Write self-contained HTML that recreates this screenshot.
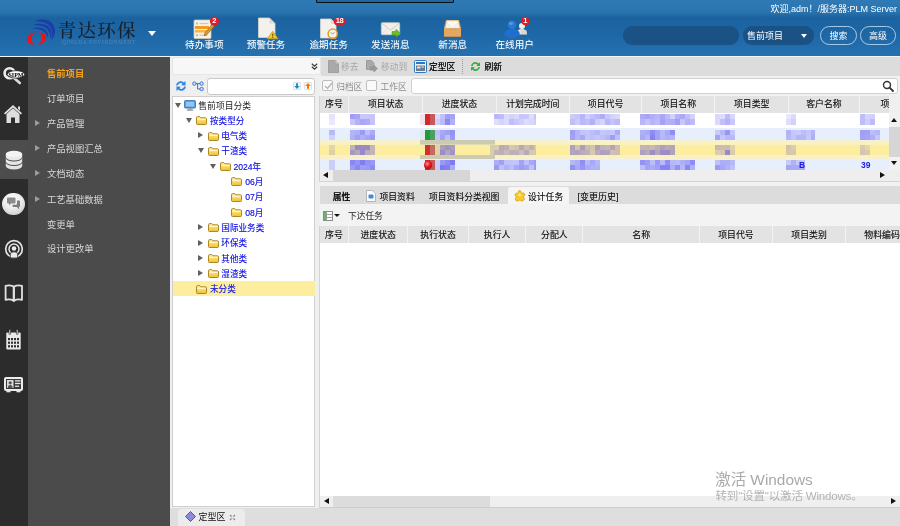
<!DOCTYPE html>
<html lang="zh-CN">
<head>
<meta charset="utf-8">
<title>PLM</title>
<style>
*{box-sizing:border-box;margin:0;padding:0}
html,body{width:900px;height:526px;overflow:hidden;background:#dedede}
body{position:relative;will-change:transform;font-family:"Liberation Sans","Noto Sans CJK SC",sans-serif;font-size:9.5px;color:#222;line-height:1}
.abs{position:absolute}
#hdr{left:0;top:0;width:900px;height:56px;background:linear-gradient(to bottom,#2f7ab5 0,#2a73ae 12px,#1b629f 18px,#1e67a6 34px,#2571b0 56px)}
#hline{left:0;top:55.7px;width:900px;height:1.4px;background:#f2f6f9}
#topbox{left:316px;top:-3.6px;width:138px;height:7px;background:#1d67a6;border:1.5px solid #0a0f14;border-radius:1px}
.logo-t{left:57.6px;top:22px;font-family:"Liberation Serif","Noto Serif CJK SC",serif;font-size:18.5px;letter-spacing:1.3px;color:#17202a;font-weight:500;white-space:nowrap}
.logo-s{left:62px;top:39.5px;font-size:5.5px;letter-spacing:0.6px;color:#5488b8;white-space:nowrap;font-family:"Liberation Serif",serif}
.tb{top:40px;width:60px;text-align:center;color:#fff;font-size:9.6px;white-space:nowrap;text-shadow:0 0 1px rgba(255,255,255,.25)}
.welcome{right:3px;top:4.6px;color:#fff;font-size:9px;white-space:nowrap}
#sbox{left:622.5px;top:26.2px;width:116px;height:18.6px;border-radius:9px;background:#1a5286}
#ssel{left:742.5px;top:26.2px;width:71.6px;height:18.6px;border-radius:9px;background:#1a5286;color:#fff;font-size:9px;padding:6.1px 0 0 4.6px}
.hbtn{top:26.2px;width:36.4px;height:18.6px;border-radius:9.3px;border:1px solid #a6c9e6;color:#fff;font-size:9px;text-align:center;padding-top:5.1px}
#ibar{left:0;top:57px;width:28px;height:469px;background:#2c2c2c}
#isel{left:0;top:140px;width:28px;height:38.5px;background:#4d4d4d}
#menu{left:28px;top:57px;width:142px;height:469px;background:#4b4b4b}
.mi{left:47px;color:#d8d8d8;font-size:9.3px;white-space:nowrap}
.ma{left:34.6px;width:0;height:0;border-left:5.6px solid #9c9c9c;border-top:3.8px solid transparent;border-bottom:3.8px solid transparent}

#treetb{left:172px;top:57px;width:148.5px;height:18px;background:#f7f7f7;border:1px solid #e6e6e6;border-radius:2px}
#treepanel{left:172px;top:96.2px;width:143.4px;height:411px;background:#fff;border:1px solid #cfcfcf}
.tr{left:173px;width:141px;height:15px}
.tt{color:#1a1ae6;font-size:8.6px;white-space:nowrap;text-shadow:0 0 .3px rgba(40,40,238,.6)}
.ta{width:0;height:0}
.ta.d{border-top:5px solid #606060;border-left:3.1px solid transparent;border-right:3.1px solid transparent}
.ta.r{border-left:5px solid #606060;border-top:3.1px solid transparent;border-bottom:3.1px solid transparent}
#tinput{left:207px;top:78px;width:108px;height:17px;background:#fff;border:1px solid #c8c8c8;border-radius:3px}

#leftbg{left:170px;top:57px;width:151px;height:451px;background:#efefef}
#mainbg{left:320px;top:57px;width:580px;height:451px;background:#f1f1f1}
#mtb{left:321px;top:57px;width:579px;height:19px;background:#dcdcdc}
.gt{font-size:8.7px;color:#a6a6a6;white-space:nowrap}
.bt{font-size:8.8px;color:#111;white-space:nowrap;text-shadow:0 0 .5px #111}
.cb{width:11px;height:11px;border:1px solid #bdbdbd;border-radius:2px;background:#fafafa}
#minput{left:411px;top:78.4px;width:487px;height:16px;background:#fff;border:1px solid #d0d0d0;border-radius:3px}
.gh{height:17.2px;background:#e3e3e3}
.ghc{top:0;height:17.2px;border-right:1px solid #f3f3f3;text-align:center;font-size:8.9px;color:#1a1a1a;padding-top:4.6px;text-shadow:0 0 .3px rgba(0,0,0,.5);white-space:nowrap;overflow:hidden}
.gr{left:320px;width:568px;height:14.5px}
.mz{height:9px;background:#b9b5f5;opacity:.9;filter:blur(.6px)}
#tabs{left:320px;top:186px;width:580px;height:18px;background:#dcdcdc}
.tab{top:186px;height:18px;font-size:8.8px;color:#151515;padding-top:7.4px;text-shadow:0 0 .3px rgba(0,0,0,.45);white-space:nowrap}
#bbar{left:170px;top:508px;width:730px;height:18px;background:#dedede}
#mos i{position:absolute;display:block}
.g2{height:16.8px}.g2 .ghc{padding-top:5.3px;height:16.8px}
</style>
</head>
<body>
<div id="hdr" class="abs"></div>
<div id="hline" class="abs"></div>
<div id="topbox" class="abs"></div>

<!-- logo -->
<svg class="abs" style="left:25px;top:17px" width="34" height="30" viewBox="0 0 34 30">
  <path d="M10 4 C15 1.5,24 1,28.5 8 C31.5 13,30 19.5,26 23.5 C28 18,27.5 11,23 7.5 C19 4.5,14 4,10 4Z" fill="#1b3fa6"/>
  <path d="M8 8 C13 6,20 6,24 10 C27 13.5,27 18.5,25 22 C25.5 17,24 13,20.5 10.5 C17 8.3,12 8,8 8Z" fill="#1b3fa6"/>
  <path d="M7 11.5 C11 10,17 10,20.5 13 C23 15.5,23.5 18.5,23 20.5 C22 17.5,20 15,17 13.5 C14 12,10 11.5,7 11.5Z" fill="#1b3fa6"/>
  <path d="M10 15.5 C4 16.5,0.5 21,3 25.5 C4.5 27.5,7.5 28,10 27 C7 25.5,5.5 23,6.5 20.5 C7.2 18.5,8.5 17,10 15.5Z" fill="#ee1219"/>
  <path d="M14.5 15.5 C19 15.5,22 18,21 22 C20 25,17 27.5,13 28 C16 25.5,17.5 23,17 20.5 C16.7 18.5,15.8 17,14.5 15.5Z" fill="#ee1219"/>
</svg>
<div class="abs logo-t">青达环保</div>
<div class="abs logo-s">QINGDA ENVIRONMENT</div>
<div class="abs" style="left:148px;top:31px;width:0;height:0;border-top:5px solid #fff;border-left:4.5px solid transparent;border-right:4.5px solid transparent"></div>

<div class="abs tb" style="left:174.3px">待办事项</div>
<div class="abs tb" style="left:236px">预警任务</div>
<div class="abs tb" style="left:298.7px">逾期任务</div>
<div class="abs tb" style="left:360.3px">发送消息</div>
<div class="abs tb" style="left:422.7px">新消息</div>
<div class="abs tb" style="left:484.7px">在线用户</div>

<div class="abs welcome">欢迎,adm！/服务器:PLM Server</div>
<div id="sbox" class="abs"></div>
<div id="ssel" class="abs">售前项目</div>
<div class="abs" style="left:801.2px;top:34px;width:0;height:0;border-top:4.2px solid #fff;border-left:3.7px solid transparent;border-right:3.7px solid transparent"></div>
<div class="abs hbtn" style="left:820.2px">搜索</div>
<div class="abs hbtn" style="left:859.7px">高级</div>

<div id="ibar" class="abs"></div>
<div id="isel" class="abs"></div>
<div id="menu" class="abs"></div>
<div class="abs mi" style="top:69.6px;color:#f5a31a;font-weight:bold">售前项目</div>
<div class="abs mi" style="top:94.6px">订单项目</div>
<div class="abs mi" style="top:119.6px">产品管理</div><div class="abs ma" style="top:119.7px"></div>
<div class="abs mi" style="top:145.0px">产品视图汇总</div><div class="abs ma" style="top:145.0px"></div>
<div class="abs mi" style="top:170.1px">文档动态</div><div class="abs ma" style="top:170.4px"></div>
<div class="abs mi" style="top:195.6px">工艺基础数据</div><div class="abs ma" style="top:195.8px"></div>
<div class="abs mi" style="top:220.6px">变更单</div>
<div class="abs mi" style="top:245.1px">设计更改单</div>



<!-- header icons -->
<svg class="abs" style="left:193px;top:16px" width="28" height="24" viewBox="0 0 28 24">
  <rect x="1" y="4" width="17" height="18.5" rx="1" fill="#f7f4ec" stroke="#cfc7b4" stroke-width=".8"/>
  <rect x="3" y="6.5" width="2" height="2" fill="#b8b8b8"/><rect x="6.5" y="6.8" width="9" height="1.4" fill="#c9c9c9"/>
  <rect x="2" y="10" width="14" height="3" fill="#f29a1f"/>
  <rect x="2" y="14" width="12" height="2.6" fill="#f6b44a"/>
  <rect x="3" y="18.2" width="2" height="2" fill="#b8b8b8"/><rect x="6.5" y="18.5" width="8" height="1.4" fill="#c9c9c9"/>
  <path d="M19.5 8 L21.5 10 L13.5 19 L11.2 19.8 L11.8 17.2Z" fill="#d99a2b" stroke="#8a5a12" stroke-width=".6"/>
  <circle cx="21.4" cy="5" r="4.6" fill="#e01c24"/>
</svg>
<div class="abs" style="left:211.4px;top:16.8px;width:6px;text-align:center;font-size:7.5px;font-weight:bold;color:#fff;line-height:8.5px">2</div>

<svg class="abs" style="left:257px;top:17px" width="23" height="23" viewBox="0 0 23 23">
  <path d="M1.5 1 L12.5 1 L18 6.5 L18 20.5 L1.5 20.5Z" fill="#f3f1ec" stroke="#d9d5cb" stroke-width=".8"/>
  <path d="M12.5 1 L12.5 6.5 L18 6.5Z" fill="#dedad0"/>
  <path d="M15.7 14.2 L21 21.8 L10.4 21.8Z" fill="#f2c531" stroke="#c99a12" stroke-width=".8" stroke-linejoin="round"/>
  <rect x="15.2" y="16.6" width="1" height="2.8" fill="#6b4e00"/><rect x="15.2" y="20" width="1" height="1" fill="#6b4e00"/>
</svg>

<svg class="abs" style="left:319px;top:16px" width="28" height="24" viewBox="0 0 28 24">
  <path d="M1.5 3 L12 3 L17 8 L17 22 L1.5 22Z" fill="#f3f1ec" stroke="#d9d5cb" stroke-width=".8"/>
  <path d="M12 3 L12 8 L17 8Z" fill="#dedad0"/>
  <circle cx="13.7" cy="17.7" r="4.6" fill="#f6f3ea" stroke="#e49a1a" stroke-width="1.5"/>
  <path d="M11.8 16.2 L13.7 18.2 L15.6 16.2" fill="none" stroke="#9a9a9a" stroke-width="1"/>
  <rect x="14.8" y="1.2" width="11.6" height="8.6" rx="4.3" fill="#e01c24"/>
</svg>
<div class="abs" style="left:333.8px;top:17px;width:11.6px;text-align:center;font-size:7.5px;font-weight:bold;color:#fff;line-height:8.5px;letter-spacing:-.3px">18</div>

<svg class="abs" style="left:380px;top:21px" width="22" height="18" viewBox="0 0 22 18">
  <rect x="1.3" y="1.7" width="18.4" height="12" rx="1.2" fill="#f2efe8" stroke="#d3cec2" stroke-width=".7"/>
  <path d="M1.5 2 L10.5 9 L19.5 2" fill="none" stroke="#cfc9bb" stroke-width=".9"/>
  <path d="M1.8 13.3 L8 7.5 M19.2 13.3 L13 7.5" stroke="#ddd8cc" stroke-width=".7"/>
  <path d="M12 10.5 L16 10.5 L16 8.3 L20.4 12.3 L16 16.3 L16 14 L12 14Z" fill="#6cbf2c" stroke="#4c9a18" stroke-width=".6"/>
</svg>

<svg class="abs" style="left:443px;top:19px" width="19" height="20" viewBox="0 0 19 20">
  <path d="M3 1 L16 1 L18 9 L18 18 L1 18 L1 9Z" fill="#dba463"/>
  <path d="M3.8 1.8 L15.2 1.8 L16.6 9 L2.4 9Z" fill="#f4f1ea"/>
  <path d="M4 4 L9.5 9 L15 4 L15 2 L4 2Z" fill="#fbfaf6" stroke="#ddd6c6" stroke-width=".5"/>
  <path d="M1 9 L6 9 L6.8 12 L12.2 12 L13 9 L18 9 L18 18 L1 18Z" fill="#e0a864"/>
  <path d="M1 17 L18 17 L18 18 L1 18Z" fill="#c98f4c"/>
</svg>

<svg class="abs" style="left:503px;top:16px" width="28" height="24" viewBox="0 0 28 24">
  <circle cx="19" cy="10" r="3" fill="#f2efe9"/>
  <path d="M13.5 18.5 Q13.5 13 19 13 Q24 13 24 18.5Z" fill="#e6e3dc"/>
  <rect x="18.5" y="14" width="5" height="4" fill="#d8d4cb" opacity=".8"/>
  <circle cx="9" cy="8.8" r="4.3" fill="#2a78d6"/>
  <ellipse cx="9" cy="17.6" rx="7.7" ry="4.6" fill="#1e6fd0"/>
  <ellipse cx="8" cy="7.5" rx="2.2" ry="1.8" fill="#5a9ce6" opacity=".8"/>
  <circle cx="22.3" cy="5" r="4.2" fill="#e01c24"/>
</svg>
<div class="abs" style="left:522.3px;top:16.7px;width:6px;text-align:center;font-size:7.5px;font-weight:bold;color:#fff;line-height:8.5px">1</div>

<!-- sidebar icons -->
<svg class="abs" style="left:2px;top:65px" width="24" height="22" viewBox="0 0 24 22">
  <circle cx="7.6" cy="8.2" r="5" fill="none" stroke="#ececec" stroke-width="2.6"/>
  <path d="M12 13 L17.8 18" stroke="#dcdcdc" stroke-width="2.6" stroke-linecap="round"/>
  <ellipse cx="14" cy="9.4" rx="8.6" ry="3.7" fill="#fff" stroke="#2a2a2a" stroke-width=".8"/><text x="14" y="11.5" text-anchor="middle" font-family="Liberation Serif,serif" font-weight="bold" font-size="6" fill="#000">SIPM</text>
</svg>


<svg class="abs" style="left:3px;top:104px" width="20" height="20" viewBox="0 0 20 20">
  <path d="M10 1 L19 9.3 L17.8 10.6 L10 3.6 L2.2 10.6 L1 9.3Z" fill="#e2e2e2"/>
  <path d="M15 2.5 L17 2.5 L17 6.5 L15 4.7Z" fill="#e2e2e2"/>
  <path d="M3.5 10 L10 4.3 L16.5 10 L16.5 19 L12 19 L12 13.5 L8 13.5 L8 19 L3.5 19Z" fill="#dedede"/>
</svg>

<svg class="abs" style="left:5px;top:150px" width="18" height="20" viewBox="0 0 18 20">
  <path d="M0.8 12.5 L0.8 16 A8.2 3.4 0 0 0 17.2 16 L17.2 12.5 A8.2 3.4 0 0 1 0.8 12.5Z" fill="#e3e3e3"/>
  <path d="M0.8 8 L0.8 11.5 A8.2 3.4 0 0 0 17.2 11.5 L17.2 8 A8.2 3.4 0 0 1 0.8 8Z" fill="#e6e6e6"/>
  <path d="M0.8 4 L0.8 7 A8.2 3.4 0 0 0 17.2 7 L17.2 4Z" fill="#e9e9e9"/>
  <ellipse cx="9" cy="4" rx="8.2" ry="3.3" fill="#f4f4f4"/>
</svg>

<div class="abs" style="left:2.3px;top:192.6px;width:22.4px;height:22.4px;border-radius:50%;background:radial-gradient(circle at 45% 30%,#ffffff 0,#ededed 45%,#bdbdbd 100%)"></div>
<svg class="abs" style="left:6px;top:197px" width="16" height="14" viewBox="0 0 16 14">
  <path d="M1 1.5 Q1 0.5 2 0.5 L8.5 0.5 Q9.5 0.5 9.5 1.5 L9.5 5.5 Q9.5 6.5 8.5 6.5 L5 6.5 L3 8.5 L3 6.5 L2 6.5 Q1 6.5 1 5.5Z" fill="#8c8c8c"/>
  <path d="M11 3.5 L13 3.5 Q14 3.5 14 4.5 L14 9 Q14 10 13 10 L13 12.2 L10.8 10 L7.5 10 Q6.5 10 6.5 9 L6.5 7.8 L10 7.8 Q11 7.8 11 6.8Z" fill="#7e7e7e"/>
</svg>

<svg class="abs" style="left:4px;top:239px" width="20" height="20" viewBox="0 0 20 20">
  <circle cx="10" cy="10" r="8.3" fill="none" stroke="#e4e4e4" stroke-width="1.7"/>
  <circle cx="10" cy="10" r="5" fill="none" stroke="#e4e4e4" stroke-width="1.5"/>
  <circle cx="10" cy="9.5" r="2.3" fill="#e9e9e9"/>
  <path d="M6.3 19 L6.3 15 Q6.3 12.8 10 12.8 Q13.7 12.8 13.7 15 L13.7 19Z" fill="#e9e9e9" stroke="#2a2a2a" stroke-width=".8"/>
</svg>

<svg class="abs" style="left:4px;top:284px" width="20" height="19" viewBox="0 0 20 19">
  <path d="M1.6 1.8 Q6 0.6 9.6 2.6 L9.6 16.6 Q6 14.8 1.6 15.8Z" fill="none" stroke="#e0e0e0" stroke-width="1.8" stroke-linejoin="round"/>
  <path d="M18 1.8 Q13.6 0.6 10 2.6 L10 16.6 Q13.6 14.8 18 15.8Z" fill="none" stroke="#e0e0e0" stroke-width="1.8" stroke-linejoin="round"/>
  <path d="M8 16.3 L9.8 18.2 L11.6 16.3Z" fill="#e0e0e0"/>
</svg>

<svg class="abs" style="left:6px;top:329px" width="15" height="21" viewBox="0 0 15 21">
  <rect x="0.3" y="3.5" width="14.4" height="17" rx="1" fill="#e9e9e9"/>
  <rect x="3" y="0.5" width="1.6" height="5" rx=".8" fill="#e9e9e9" stroke="#2a2a2a" stroke-width=".7"/>
  <rect x="10.4" y="0.5" width="1.6" height="5" rx=".8" fill="#e9e9e9" stroke="#2a2a2a" stroke-width=".7"/>
  <g fill="#2e2e2e">
   <rect x="2" y="9" width="2" height="2.2"/><rect x="5" y="9" width="2" height="2.2"/><rect x="8" y="9" width="2" height="2.2"/><rect x="11" y="9" width="2" height="2.2"/>
   <rect x="2" y="12.6" width="2" height="2.2"/><rect x="5" y="12.6" width="2" height="2.2"/><rect x="8" y="12.6" width="2" height="2.2"/><rect x="11" y="12.6" width="2" height="2.2"/>
   <rect x="2" y="16.2" width="2" height="2.2"/><rect x="5" y="16.2" width="2" height="2.2"/><rect x="8" y="16.2" width="2" height="2.2"/><rect x="11" y="16.2" width="2" height="2.2"/>
  </g>
</svg>

<svg class="abs" style="left:4px;top:377px" width="19" height="16" viewBox="0 0 19 16">
  <rect x="1" y="1" width="17" height="12" rx="1" fill="#3a3a3a" stroke="#ececec" stroke-width="2"/>
  <rect x="3" y="3" width="6.5" height="8" fill="#dcdcdc"/>
  <circle cx="6.2" cy="5.8" r="1.6" fill="#555"/><path d="M3.8 11 Q3.8 8 6.2 8 Q8.6 8 8.6 11Z" fill="#555"/>
  <rect x="11" y="3.2" width="5.5" height="1.3" fill="#e6e6e6"/><rect x="11" y="5.8" width="5.5" height="1.3" fill="#e6e6e6"/><rect x="11" y="8.6" width="4" height="1.3" fill="#e6e6e6"/>
  <rect x="2.5" y="13.5" width="4" height="1.8" fill="#e6e6e6"/><rect x="12.5" y="13.5" width="4" height="1.8" fill="#e6e6e6"/>
</svg>

<div id="leftbg" class="abs"></div>
<!-- main -->
<div id="mainbg" class="abs"></div>
<div id="mtb" class="abs"></div>
<svg class="abs" style="left:327.5px;top:60px" width="11" height="13" viewBox="0 0 11 13"><path d="M0.5 0.5 L7 0.5 L10.5 4 L10.5 12.5 L0.5 12.5Z" fill="#a9a9a9" stroke="#a0a0a0"/><path d="M7 0.5 L7 4 L10.5 4" fill="#c9c9c9" stroke="#a0a0a0"/></svg>
<div class="abs gt" style="left:341px;top:62.8px">移去</div>
<svg class="abs" style="left:365.6px;top:60px" width="12" height="13" viewBox="0 0 12 13"><path d="M0.5 0.5 L5.5 0.5 L7.8 2.8 L7.8 9.5 L0.5 9.5Z" fill="#a9a9a9" stroke="#9c9c9c"/><path d="M4.5 7 L8 7 L8 5.2 L11.4 8.6 L8 12 L8 10.2 L4.5 10.2Z" fill="#9a9a9a" stroke="#8c8c8c" stroke-width=".6"/></svg>
<div class="abs gt" style="left:381px;top:62.8px">移动到</div>
<svg class="abs" style="left:414px;top:60px" width="13" height="13" viewBox="0 0 13 13"><rect x="0.5" y="0.5" width="12" height="12" rx="1" fill="#eaf3fc" stroke="#2f78c4"/><rect x="2" y="2" width="9" height="2" fill="#2f78c4"/><rect x="2" y="5.5" width="9" height="5.5" fill="#6a7c8c"/><rect x="3" y="6.5" width="3.5" height="2" fill="#dfe7ee"/><rect x="7.5" y="6.5" width="2.5" height="1" fill="#dfe7ee"/></svg>
<div class="abs bt" style="left:429px;top:62.8px">定型区</div>
<div class="abs" style="left:461.5px;top:59px;width:0;height:15px;border-left:1px dotted #9a9a9a"></div>
<svg class="abs" style="left:469.5px;top:61px" width="11" height="11" viewBox="0 0 11 11"><path d="M1 5 A4.3 4.3 0 0 1 8.6 2.6 L10 1.2 L10 5 L6.2 5 L7.5 3.7 A2.8 2.8 0 0 0 2.6 5Z" fill="#2eb135"/><path d="M10 6 A4.3 4.3 0 0 1 2.4 8.4 L1 9.8 L1 6 L4.8 6 L3.5 7.3 A2.8 2.8 0 0 0 8.4 6Z" fill="#2eb135"/></svg>
<div class="abs bt" style="left:484.5px;top:62.8px">刷新</div>
<div class="abs cb" style="left:322px;top:80.3px"></div>
<svg class="abs" style="left:323.5px;top:81.8px" width="9" height="8" viewBox="0 0 9 8"><path d="M1 4 L3.5 6.5 L8 1" fill="none" stroke="#b4b4b4" stroke-width="1.4"/></svg>
<div class="abs gt" style="left:336.2px;top:83px;color:#8e8e8e">归档区</div>
<div class="abs cb" style="left:365.5px;top:80.3px"></div>
<div class="abs gt" style="left:380.6px;top:83px;color:#8e8e8e">工作区</div>
<div id="minput" class="abs"></div>
<svg class="abs" style="left:882px;top:80px" width="12" height="12" viewBox="0 0 12 12"><circle cx="5" cy="5" r="3.5" fill="none" stroke="#333" stroke-width="1.4"/><path d="M7.6 7.6 L11 11" stroke="#333" stroke-width="1.8" stroke-linecap="round"/></svg>
<div class="abs" style="left:319.7px;top:95.9px;width:580.3px;height:85.6px;background:#fff"></div>
<div class="abs gh" style="left:319.7px;top:95.9px;width:569.2px;overflow:hidden"><div class="abs ghc" style="left:0.0px;width:29.5px">序号</div><div class="abs ghc" style="left:29.5px;width:74.1px">项目状态</div><div class="abs ghc" style="left:103.6px;width:73.3px">进度状态</div><div class="abs ghc" style="left:176.9px;width:73.4px">计划完成时间</div><div class="abs ghc" style="left:250.3px;width:72.2px">项目代号</div><div class="abs ghc" style="left:322.5px;width:73.3px">项目名称</div><div class="abs ghc" style="left:395.8px;width:73.4px">项目类型</div><div class="abs ghc" style="left:469.2px;width:71.1px">客户名称</div><div class="abs ghc" style="left:540.3px;width:73.0px;text-align:left;padding-left:20.5px;border-right:none">项目</div></div>
<div class="abs" style="left:888.9px;top:95.9px;width:11.1px;height:17.2px;background:#efefef"></div>
<div class="abs" style="left:319.7px;top:112.8px;width:569.2px;height:14.8px;background:#ffffff"></div>
<div class="abs" style="left:319.7px;top:127.6px;width:569.2px;height:15.2px;background:#e7effd"></div>
<div class="abs" style="left:319.7px;top:158.2px;width:569.2px;height:11.8px;background:#e7effd"></div>
<div class="abs" style="left:319.7px;top:140px;width:569.2px;height:19.5px;background:linear-gradient(to bottom,#f3f2dd 0,#f8f1c6 1.5px,#f8f1c6 4.2px,#fdee9f 5.2px,#fdee9f 14.8px,#f8f1c6 15.8px,#f8f1c6 18.3px,#eef1ea 19.5px)"></div>
<div class="abs" style="left:420px;top:140.2px;width:74.5px;height:19.2px;background:linear-gradient(to bottom,#cdcab2 0,#cdcab2 4.3px,rgba(253,238,159,0) 4.8px,rgba(253,238,159,0) 14.6px,#cdcab2 15.1px,#cdcab2 19.2px)"></div>
<div class="abs" style="left:490.3px;top:144.5px;width:4.2px;height:10.6px;background:#d6cfa6"></div>
<div id="mos">
<i style="left:329.4px;top:114.2px;width:5.2px;height:5.4px;background:#e5e4fc"></i><i style="left:329.4px;top:119.4px;width:5.2px;height:5.4px;background:#e9e8fd"></i>
<i style="left:350.0px;top:114.2px;width:5.2px;height:5.4px;background:#a19df6"></i><i style="left:350.0px;top:119.4px;width:5.2px;height:5.4px;background:#c7c5fa"></i><i style="left:355.0px;top:114.2px;width:5.2px;height:5.4px;background:#a8a5f7"></i><i style="left:355.0px;top:119.4px;width:5.2px;height:5.4px;background:#b3b1f8"></i><i style="left:360.0px;top:114.2px;width:5.2px;height:5.4px;background:#c8c6fa"></i><i style="left:360.0px;top:119.4px;width:5.2px;height:5.4px;background:#aaa7f7"></i><i style="left:365.0px;top:114.2px;width:5.2px;height:5.4px;background:#c9c7fa"></i><i style="left:365.0px;top:119.4px;width:5.2px;height:5.4px;background:#afacf7"></i><i style="left:370.0px;top:114.2px;width:5.2px;height:5.4px;background:#c7c5fa"></i><i style="left:370.0px;top:119.4px;width:5.2px;height:5.4px;background:#c5c3f9"></i>
<i style="left:435.0px;top:114.2px;width:5.2px;height:5.4px;background:#dbdafb"></i><i style="left:435.0px;top:119.4px;width:5.2px;height:5.4px;background:#cfcdfa"></i>
<i style="left:440.0px;top:114.2px;width:5.2px;height:5.4px;background:#c3c1f9"></i><i style="left:440.0px;top:119.4px;width:5.2px;height:5.4px;background:#bdbaf9"></i><i style="left:445.0px;top:114.2px;width:5.2px;height:5.4px;background:#a29ff6"></i><i style="left:445.0px;top:119.4px;width:5.2px;height:5.4px;background:#8d89f4"></i><i style="left:450.0px;top:114.2px;width:5.2px;height:5.4px;background:#a5a2f7"></i><i style="left:450.0px;top:119.4px;width:5.2px;height:5.4px;background:#b1aff8"></i>
<i style="left:494.4px;top:114.2px;width:5.2px;height:5.4px;background:#b9b7f8"></i><i style="left:494.4px;top:119.4px;width:5.2px;height:5.4px;background:#deddfc"></i><i style="left:499.4px;top:114.2px;width:5.2px;height:5.4px;background:#bebcf9"></i><i style="left:499.4px;top:119.4px;width:5.2px;height:5.4px;background:#d4d3fb"></i><i style="left:504.4px;top:114.2px;width:5.2px;height:5.4px;background:#dad9fb"></i><i style="left:504.4px;top:119.4px;width:5.2px;height:5.4px;background:#dbdafb"></i><i style="left:509.4px;top:114.2px;width:5.2px;height:5.4px;background:#d4d2fb"></i><i style="left:509.4px;top:119.4px;width:5.2px;height:5.4px;background:#c0bef9"></i><i style="left:514.4px;top:114.2px;width:5.2px;height:5.4px;background:#d9d7fb"></i><i style="left:514.4px;top:119.4px;width:5.2px;height:5.4px;background:#c9c7fa"></i><i style="left:519.4px;top:114.2px;width:5.2px;height:5.4px;background:#c7c5fa"></i><i style="left:519.4px;top:119.4px;width:5.2px;height:5.4px;background:#d1d0fa"></i><i style="left:524.4px;top:114.2px;width:5.2px;height:5.4px;background:#cac8fa"></i><i style="left:524.4px;top:119.4px;width:5.2px;height:5.4px;background:#dddcfc"></i><i style="left:529.4px;top:114.2px;width:5.2px;height:5.4px;background:#dddcfc"></i><i style="left:529.4px;top:119.4px;width:5.2px;height:5.4px;background:#d8d6fb"></i><i style="left:534.4px;top:114.2px;width:1.4px;height:5.4px;background:#c5c3f9"></i><i style="left:534.4px;top:119.4px;width:1.4px;height:5.4px;background:#cfcdfa"></i>
<i style="left:570.0px;top:114.2px;width:5.2px;height:5.4px;background:#cccbfa"></i><i style="left:570.0px;top:119.4px;width:5.2px;height:5.4px;background:#c0bef9"></i><i style="left:575.0px;top:114.2px;width:5.2px;height:5.4px;background:#c6c4f9"></i><i style="left:575.0px;top:119.4px;width:5.2px;height:5.4px;background:#cdcbfa"></i><i style="left:580.0px;top:114.2px;width:5.2px;height:5.4px;background:#b6b4f8"></i><i style="left:580.0px;top:119.4px;width:5.2px;height:5.4px;background:#bbb8f8"></i><i style="left:585.0px;top:114.2px;width:5.2px;height:5.4px;background:#d0cefa"></i><i style="left:585.0px;top:119.4px;width:5.2px;height:5.4px;background:#c0bef9"></i><i style="left:590.0px;top:114.2px;width:5.2px;height:5.4px;background:#c3c1f9"></i><i style="left:590.0px;top:119.4px;width:5.2px;height:5.4px;background:#b2b0f8"></i><i style="left:595.0px;top:114.2px;width:5.2px;height:5.4px;background:#b9b7f8"></i><i style="left:595.0px;top:119.4px;width:5.2px;height:5.4px;background:#cdccfa"></i><i style="left:600.0px;top:114.2px;width:5.2px;height:5.4px;background:#aeabf7"></i><i style="left:600.0px;top:119.4px;width:5.2px;height:5.4px;background:#d5d4fb"></i><i style="left:605.0px;top:114.2px;width:5.2px;height:5.4px;background:#c8c6fa"></i><i style="left:605.0px;top:119.4px;width:5.2px;height:5.4px;background:#b8b5f8"></i><i style="left:610.0px;top:114.2px;width:5.2px;height:5.4px;background:#d4d2fb"></i><i style="left:610.0px;top:119.4px;width:5.2px;height:5.4px;background:#c4c2f9"></i><i style="left:615.0px;top:114.2px;width:5.2px;height:5.4px;background:#d9d8fb"></i><i style="left:615.0px;top:119.4px;width:5.2px;height:5.4px;background:#bcbaf9"></i>
<i style="left:640.0px;top:114.2px;width:5.2px;height:5.4px;background:#adabf7"></i><i style="left:640.0px;top:119.4px;width:5.2px;height:5.4px;background:#b8b5f8"></i><i style="left:645.0px;top:114.2px;width:5.2px;height:5.4px;background:#a8a5f7"></i><i style="left:645.0px;top:119.4px;width:5.2px;height:5.4px;background:#c5c3f9"></i><i style="left:650.0px;top:114.2px;width:5.2px;height:5.4px;background:#b1aef8"></i><i style="left:650.0px;top:119.4px;width:5.2px;height:5.4px;background:#b6b4f8"></i><i style="left:655.0px;top:114.2px;width:5.2px;height:5.4px;background:#b7b5f8"></i><i style="left:655.0px;top:119.4px;width:5.2px;height:5.4px;background:#bebbf9"></i><i style="left:660.0px;top:114.2px;width:5.2px;height:5.4px;background:#a9a7f7"></i><i style="left:660.0px;top:119.4px;width:5.2px;height:5.4px;background:#a4a1f6"></i><i style="left:665.0px;top:114.2px;width:5.2px;height:5.4px;background:#bdbaf9"></i><i style="left:665.0px;top:119.4px;width:5.2px;height:5.4px;background:#b3b0f8"></i><i style="left:670.0px;top:114.2px;width:5.2px;height:5.4px;background:#d2d1fb"></i><i style="left:670.0px;top:119.4px;width:5.2px;height:5.4px;background:#b1aef8"></i><i style="left:675.0px;top:114.2px;width:5.2px;height:5.4px;background:#b4b1f8"></i><i style="left:675.0px;top:119.4px;width:5.2px;height:5.4px;background:#a19ef6"></i><i style="left:680.0px;top:114.2px;width:5.2px;height:5.4px;background:#aaa8f7"></i><i style="left:680.0px;top:119.4px;width:5.2px;height:5.4px;background:#c7c5fa"></i><i style="left:685.0px;top:114.2px;width:5.2px;height:5.4px;background:#c1bff9"></i><i style="left:685.0px;top:119.4px;width:5.2px;height:5.4px;background:#b2b0f8"></i><i style="left:690.0px;top:114.2px;width:5.2px;height:5.4px;background:#d4d3fb"></i><i style="left:690.0px;top:119.4px;width:5.2px;height:5.4px;background:#bdbbf9"></i>
<i style="left:715.0px;top:114.2px;width:5.2px;height:5.4px;background:#d9d8fb"></i><i style="left:715.0px;top:119.4px;width:5.2px;height:5.4px;background:#dbdafb"></i><i style="left:720.0px;top:114.2px;width:5.2px;height:5.4px;background:#dedcfc"></i><i style="left:720.0px;top:119.4px;width:5.2px;height:5.4px;background:#c2bff9"></i>
<i style="left:725.0px;top:114.2px;width:5.2px;height:5.4px;background:#bdbbf9"></i><i style="left:725.0px;top:119.4px;width:5.2px;height:5.4px;background:#b4b2f8"></i>
<i style="left:730.0px;top:114.2px;width:5.2px;height:5.4px;background:#d8d7fb"></i><i style="left:730.0px;top:119.4px;width:5.2px;height:5.4px;background:#c8c6fa"></i>
<i style="left:785.5px;top:114.2px;width:5.2px;height:5.4px;background:#e8e7fc"></i><i style="left:785.5px;top:119.4px;width:5.2px;height:5.4px;background:#deddfc"></i><i style="left:790.5px;top:114.2px;width:5.2px;height:5.4px;background:#dcdafb"></i><i style="left:790.5px;top:119.4px;width:5.2px;height:5.4px;background:#d3d1fb"></i>
<i style="left:860.0px;top:114.2px;width:5.2px;height:5.4px;background:#c0bdf9"></i><i style="left:860.0px;top:119.4px;width:5.2px;height:5.4px;background:#bebcf9"></i><i style="left:865.0px;top:114.2px;width:5.2px;height:5.4px;background:#d5d3fb"></i><i style="left:865.0px;top:119.4px;width:5.2px;height:5.4px;background:#cfcefa"></i><i style="left:870.0px;top:114.2px;width:4.6px;height:5.4px;background:#d2d0fb"></i><i style="left:870.0px;top:119.4px;width:4.6px;height:5.4px;background:#bdbbf9"></i>
<i style="left:329.4px;top:129.8px;width:5.2px;height:5.2px;background:#b7baf8"></i><i style="left:329.4px;top:134.8px;width:5.2px;height:5.2px;background:#cdd2fa"></i>
<i style="left:350.0px;top:129.8px;width:5.2px;height:5.2px;background:#b2b5f8"></i><i style="left:350.0px;top:134.8px;width:5.2px;height:5.2px;background:#afb1f8"></i><i style="left:355.0px;top:129.8px;width:5.2px;height:5.2px;background:#afb1f7"></i><i style="left:355.0px;top:134.8px;width:5.2px;height:5.2px;background:#a1a2f6"></i><i style="left:360.0px;top:129.8px;width:5.2px;height:5.2px;background:#9b9bf6"></i><i style="left:360.0px;top:134.8px;width:5.2px;height:5.2px;background:#adaff7"></i><i style="left:365.0px;top:129.8px;width:5.2px;height:5.2px;background:#bcbff9"></i><i style="left:365.0px;top:134.8px;width:5.2px;height:5.2px;background:#a5a6f7"></i><i style="left:370.0px;top:129.8px;width:5.2px;height:5.2px;background:#a8a9f7"></i><i style="left:370.0px;top:134.8px;width:5.2px;height:5.2px;background:#9d9df6"></i>
<i style="left:435.0px;top:129.8px;width:5.2px;height:5.2px;background:#bcbff9"></i><i style="left:435.0px;top:134.8px;width:5.2px;height:5.2px;background:#c2c6f9"></i>
<i style="left:440.0px;top:129.8px;width:5.2px;height:5.2px;background:#a7a8f7"></i><i style="left:440.0px;top:134.8px;width:5.2px;height:5.2px;background:#a2a2f6"></i><i style="left:445.0px;top:129.8px;width:5.2px;height:5.2px;background:#9f9ff6"></i><i style="left:445.0px;top:134.8px;width:5.2px;height:5.2px;background:#bdc1f9"></i><i style="left:450.0px;top:129.8px;width:5.2px;height:5.2px;background:#9493f5"></i><i style="left:450.0px;top:134.8px;width:5.2px;height:5.2px;background:#9a99f6"></i>
<i style="left:570.0px;top:129.8px;width:5.2px;height:5.2px;background:#9e9ef6"></i><i style="left:570.0px;top:134.8px;width:5.2px;height:5.2px;background:#a1a2f6"></i><i style="left:575.0px;top:129.8px;width:5.2px;height:5.2px;background:#b3b6f8"></i><i style="left:575.0px;top:134.8px;width:5.2px;height:5.2px;background:#b3b5f8"></i><i style="left:580.0px;top:129.8px;width:5.2px;height:5.2px;background:#c0c4f9"></i><i style="left:580.0px;top:134.8px;width:5.2px;height:5.2px;background:#a8aaf7"></i><i style="left:585.0px;top:129.8px;width:5.2px;height:5.2px;background:#c2c6f9"></i><i style="left:585.0px;top:134.8px;width:5.2px;height:5.2px;background:#c1c5f9"></i><i style="left:590.0px;top:129.8px;width:5.2px;height:5.2px;background:#bbbff9"></i><i style="left:590.0px;top:134.8px;width:5.2px;height:5.2px;background:#bdc1f9"></i><i style="left:595.0px;top:129.8px;width:5.2px;height:5.2px;background:#b5b8f8"></i><i style="left:595.0px;top:134.8px;width:5.2px;height:5.2px;background:#c2c6f9"></i><i style="left:600.0px;top:129.8px;width:5.2px;height:5.2px;background:#c4c9f9"></i><i style="left:600.0px;top:134.8px;width:5.2px;height:5.2px;background:#bec1f9"></i><i style="left:605.0px;top:129.8px;width:5.2px;height:5.2px;background:#c0c4f9"></i><i style="left:605.0px;top:134.8px;width:5.2px;height:5.2px;background:#b4b7f8"></i><i style="left:610.0px;top:129.8px;width:5.2px;height:5.2px;background:#c3c7f9"></i><i style="left:610.0px;top:134.8px;width:5.2px;height:5.2px;background:#9e9ef6"></i><i style="left:615.0px;top:129.8px;width:5.2px;height:5.2px;background:#a9abf7"></i><i style="left:615.0px;top:134.8px;width:5.2px;height:5.2px;background:#bec1f9"></i>
<i style="left:640.0px;top:129.8px;width:5.2px;height:5.2px;background:#aeb0f7"></i><i style="left:640.0px;top:134.8px;width:5.2px;height:5.2px;background:#a9aaf7"></i><i style="left:645.0px;top:129.8px;width:5.2px;height:5.2px;background:#a8a9f7"></i><i style="left:645.0px;top:134.8px;width:5.2px;height:5.2px;background:#b5b8f8"></i><i style="left:650.0px;top:129.8px;width:5.2px;height:5.2px;background:#8d8cf4"></i><i style="left:650.0px;top:134.8px;width:5.2px;height:5.2px;background:#8583f4"></i><i style="left:655.0px;top:129.8px;width:5.2px;height:5.2px;background:#a2a3f6"></i><i style="left:655.0px;top:134.8px;width:5.2px;height:5.2px;background:#a1a2f6"></i><i style="left:660.0px;top:129.8px;width:5.2px;height:5.2px;background:#b7baf8"></i><i style="left:660.0px;top:134.8px;width:5.2px;height:5.2px;background:#b6b9f8"></i><i style="left:665.0px;top:129.8px;width:5.2px;height:5.2px;background:#a9aaf7"></i><i style="left:665.0px;top:134.8px;width:5.2px;height:5.2px;background:#adaff7"></i><i style="left:670.0px;top:129.8px;width:5.2px;height:5.2px;background:#8e8df5"></i><i style="left:670.0px;top:134.8px;width:5.2px;height:5.2px;background:#b3b5f8"></i>
<i style="left:715.0px;top:129.8px;width:5.2px;height:5.2px;background:#c8ccfa"></i><i style="left:715.0px;top:134.8px;width:5.2px;height:5.2px;background:#a4a5f7"></i><i style="left:720.0px;top:129.8px;width:5.2px;height:5.2px;background:#b4b7f8"></i><i style="left:720.0px;top:134.8px;width:5.2px;height:5.2px;background:#c3c7f9"></i>
<i style="left:725.0px;top:129.8px;width:5.2px;height:5.2px;background:#9796f5"></i><i style="left:725.0px;top:134.8px;width:5.2px;height:5.2px;background:#b6b9f8"></i>
<i style="left:730.0px;top:129.8px;width:5.2px;height:5.2px;background:#c3c7f9"></i><i style="left:730.0px;top:134.8px;width:5.2px;height:5.2px;background:#b6b9f8"></i>
<i style="left:785.5px;top:129.8px;width:5.2px;height:5.2px;background:#b0b3f8"></i><i style="left:785.5px;top:134.8px;width:5.2px;height:5.2px;background:#b6b9f8"></i><i style="left:790.5px;top:129.8px;width:5.2px;height:5.2px;background:#c4c9f9"></i><i style="left:790.5px;top:134.8px;width:5.2px;height:5.2px;background:#c1c5f9"></i><i style="left:795.5px;top:129.8px;width:5.2px;height:5.2px;background:#c7ccfa"></i><i style="left:795.5px;top:134.8px;width:5.2px;height:5.2px;background:#b3b6f8"></i><i style="left:800.5px;top:129.8px;width:5.2px;height:5.2px;background:#bbbff9"></i><i style="left:800.5px;top:134.8px;width:5.2px;height:5.2px;background:#b3b6f8"></i><i style="left:805.5px;top:129.8px;width:5.2px;height:5.2px;background:#c2c6f9"></i><i style="left:805.5px;top:134.8px;width:5.2px;height:5.2px;background:#c6cafa"></i><i style="left:810.5px;top:129.8px;width:4.7px;height:5.2px;background:#b2b5f8"></i><i style="left:810.5px;top:134.8px;width:4.7px;height:5.2px;background:#acaef7"></i>
<i style="left:860.0px;top:129.8px;width:5.2px;height:5.2px;background:#9f9ff6"></i><i style="left:860.0px;top:134.8px;width:5.2px;height:5.2px;background:#a1a2f6"></i><i style="left:865.0px;top:129.8px;width:5.2px;height:5.2px;background:#a0a1f6"></i><i style="left:865.0px;top:134.8px;width:5.2px;height:5.2px;background:#a4a5f6"></i><i style="left:870.0px;top:129.8px;width:5.2px;height:5.2px;background:#babef9"></i><i style="left:870.0px;top:134.8px;width:5.2px;height:5.2px;background:#aeb0f7"></i><i style="left:875.0px;top:129.8px;width:5.2px;height:5.2px;background:#b5b7f8"></i><i style="left:875.0px;top:134.8px;width:5.2px;height:5.2px;background:#c3c7f9"></i>
<i style="left:329.4px;top:145.0px;width:5.2px;height:5.1px;background:#e5d6a7"></i><i style="left:329.4px;top:149.9px;width:5.2px;height:5.1px;background:#decfaa"></i>
<i style="left:350.0px;top:145.0px;width:5.2px;height:5.1px;background:#c1b2b5"></i><i style="left:350.0px;top:149.9px;width:5.2px;height:5.1px;background:#a899bf"></i><i style="left:355.0px;top:145.0px;width:5.2px;height:5.1px;background:#998ac5"></i><i style="left:355.0px;top:149.9px;width:5.2px;height:5.1px;background:#b6a7ba"></i><i style="left:360.0px;top:145.0px;width:5.2px;height:5.1px;background:#9a8bc4"></i><i style="left:360.0px;top:149.9px;width:5.2px;height:5.1px;background:#9789c5"></i><i style="left:365.0px;top:145.0px;width:5.2px;height:5.1px;background:#998ac5"></i><i style="left:365.0px;top:149.9px;width:5.2px;height:5.1px;background:#bbacb8"></i><i style="left:370.0px;top:145.0px;width:5.2px;height:5.1px;background:#c3b4b5"></i><i style="left:370.0px;top:149.9px;width:5.2px;height:5.1px;background:#c3b4b5"></i>
<i style="left:435.0px;top:145.0px;width:5.2px;height:5.1px;background:#e0d2a9"></i><i style="left:435.0px;top:149.9px;width:5.2px;height:5.1px;background:#e0d1a9"></i>
<i style="left:440.0px;top:145.0px;width:5.2px;height:5.1px;background:#ac9dbd"></i><i style="left:440.0px;top:149.9px;width:5.2px;height:5.1px;background:#9c8ec4"></i><i style="left:445.0px;top:145.0px;width:5.2px;height:5.1px;background:#9f91c2"></i><i style="left:445.0px;top:149.9px;width:5.2px;height:5.1px;background:#b4a6ba"></i><i style="left:450.0px;top:145.0px;width:5.2px;height:5.1px;background:#aa9cbe"></i><i style="left:450.0px;top:149.9px;width:5.2px;height:5.1px;background:#a293c1"></i>
<i style="left:494.4px;top:145.0px;width:5.2px;height:5.1px;background:#dacbac"></i><i style="left:494.4px;top:149.9px;width:5.2px;height:5.1px;background:#c3b4b5"></i><i style="left:499.4px;top:145.0px;width:5.2px;height:5.1px;background:#b8aab9"></i><i style="left:499.4px;top:149.9px;width:5.2px;height:5.1px;background:#beafb7"></i><i style="left:504.4px;top:145.0px;width:5.2px;height:5.1px;background:#bfb0b6"></i><i style="left:504.4px;top:149.9px;width:5.2px;height:5.1px;background:#cabbb2"></i><i style="left:509.4px;top:145.0px;width:5.2px;height:5.1px;background:#d6c7ad"></i><i style="left:509.4px;top:149.9px;width:5.2px;height:5.1px;background:#bdafb7"></i><i style="left:514.4px;top:145.0px;width:5.2px;height:5.1px;background:#d0c1b0"></i><i style="left:514.4px;top:149.9px;width:5.2px;height:5.1px;background:#bdaeb7"></i><i style="left:519.4px;top:145.0px;width:5.2px;height:5.1px;background:#b6a8ba"></i><i style="left:519.4px;top:149.9px;width:5.2px;height:5.1px;background:#cdbfb1"></i><i style="left:524.4px;top:145.0px;width:5.2px;height:5.1px;background:#cdbeb1"></i><i style="left:524.4px;top:149.9px;width:5.2px;height:5.1px;background:#b7a9b9"></i><i style="left:529.4px;top:145.0px;width:5.2px;height:5.1px;background:#c0b1b6"></i><i style="left:529.4px;top:149.9px;width:5.2px;height:5.1px;background:#d6c8ad"></i><i style="left:534.4px;top:145.0px;width:1.4px;height:5.1px;background:#d8c9ac"></i><i style="left:534.4px;top:149.9px;width:1.4px;height:5.1px;background:#d7c8ad"></i>
<i style="left:570.0px;top:145.0px;width:5.2px;height:5.1px;background:#afa1bc"></i><i style="left:570.0px;top:149.9px;width:5.2px;height:5.1px;background:#b3a5ba"></i><i style="left:575.0px;top:145.0px;width:5.2px;height:5.1px;background:#d2c3af"></i><i style="left:575.0px;top:149.9px;width:5.2px;height:5.1px;background:#b3a4bb"></i><i style="left:580.0px;top:145.0px;width:5.2px;height:5.1px;background:#ab9dbe"></i><i style="left:580.0px;top:149.9px;width:5.2px;height:5.1px;background:#baacb8"></i><i style="left:585.0px;top:145.0px;width:5.2px;height:5.1px;background:#c9bab2"></i><i style="left:585.0px;top:149.9px;width:5.2px;height:5.1px;background:#bfb1b6"></i><i style="left:590.0px;top:145.0px;width:5.2px;height:5.1px;background:#d3c4af"></i><i style="left:590.0px;top:149.9px;width:5.2px;height:5.1px;background:#d8c9ac"></i><i style="left:595.0px;top:145.0px;width:5.2px;height:5.1px;background:#ac9ebd"></i><i style="left:595.0px;top:149.9px;width:5.2px;height:5.1px;background:#bbacb8"></i><i style="left:600.0px;top:145.0px;width:5.2px;height:5.1px;background:#c0b2b6"></i><i style="left:600.0px;top:149.9px;width:5.2px;height:5.1px;background:#ae9fbd"></i><i style="left:605.0px;top:145.0px;width:5.2px;height:5.1px;background:#c5b6b4"></i><i style="left:605.0px;top:149.9px;width:5.2px;height:5.1px;background:#b0a2bc"></i><i style="left:610.0px;top:145.0px;width:5.2px;height:5.1px;background:#b3a4bb"></i><i style="left:610.0px;top:149.9px;width:5.2px;height:5.1px;background:#cfc0b0"></i><i style="left:615.0px;top:145.0px;width:5.2px;height:5.1px;background:#cdbeb1"></i><i style="left:615.0px;top:149.9px;width:5.2px;height:5.1px;background:#cbbdb1"></i>
<i style="left:640.0px;top:145.0px;width:5.2px;height:5.1px;background:#c2b3b5"></i><i style="left:640.0px;top:149.9px;width:5.2px;height:5.1px;background:#aea0bd"></i><i style="left:645.0px;top:145.0px;width:5.2px;height:5.1px;background:#c1b2b5"></i><i style="left:645.0px;top:149.9px;width:5.2px;height:5.1px;background:#b8a9b9"></i><i style="left:650.0px;top:145.0px;width:5.2px;height:5.1px;background:#c8bab3"></i><i style="left:650.0px;top:149.9px;width:5.2px;height:5.1px;background:#9b8dc4"></i><i style="left:655.0px;top:145.0px;width:5.2px;height:5.1px;background:#bbadb7"></i><i style="left:655.0px;top:149.9px;width:5.2px;height:5.1px;background:#b5a7ba"></i><i style="left:660.0px;top:145.0px;width:5.2px;height:5.1px;background:#aea0bd"></i><i style="left:660.0px;top:149.9px;width:5.2px;height:5.1px;background:#9c8dc4"></i><i style="left:665.0px;top:145.0px;width:5.2px;height:5.1px;background:#b7a9b9"></i><i style="left:665.0px;top:149.9px;width:5.2px;height:5.1px;background:#9b8dc4"></i><i style="left:670.0px;top:145.0px;width:5.2px;height:5.1px;background:#b3a4bb"></i><i style="left:670.0px;top:149.9px;width:5.2px;height:5.1px;background:#b1a3bb"></i>
<i style="left:715.0px;top:145.0px;width:5.2px;height:5.1px;background:#c8b9b3"></i><i style="left:715.0px;top:149.9px;width:5.2px;height:5.1px;background:#dcceab"></i><i style="left:720.0px;top:145.0px;width:5.2px;height:5.1px;background:#cbbdb1"></i><i style="left:720.0px;top:149.9px;width:5.2px;height:5.1px;background:#d6c7ad"></i>
<i style="left:725.0px;top:145.0px;width:5.2px;height:5.1px;background:#cbbcb1"></i><i style="left:725.0px;top:149.9px;width:5.2px;height:5.1px;background:#998ac5"></i>
<i style="left:730.0px;top:145.0px;width:5.2px;height:5.1px;background:#e1d2a9"></i><i style="left:730.0px;top:149.9px;width:5.2px;height:5.1px;background:#d8caac"></i>
<i style="left:785.5px;top:145.0px;width:5.2px;height:5.1px;background:#d1c3af"></i><i style="left:785.5px;top:149.9px;width:5.2px;height:5.1px;background:#d6c7ad"></i><i style="left:790.5px;top:145.0px;width:5.2px;height:5.1px;background:#ddceab"></i><i style="left:790.5px;top:149.9px;width:5.2px;height:5.1px;background:#d7c8ad"></i>
<i style="left:860.0px;top:145.0px;width:5.2px;height:5.1px;background:#dacbac"></i><i style="left:860.0px;top:149.9px;width:5.2px;height:5.1px;background:#d4c5ae"></i><i style="left:865.0px;top:145.0px;width:5.2px;height:5.1px;background:#e6d7a7"></i><i style="left:865.0px;top:149.9px;width:5.2px;height:5.1px;background:#dacbac"></i>
<i style="left:329.4px;top:160.2px;width:5.2px;height:5.1px;background:#cacffa"></i><i style="left:329.4px;top:165.1px;width:5.2px;height:5.1px;background:#cacefa"></i>
<i style="left:350.0px;top:160.2px;width:5.2px;height:5.1px;background:#8987f4"></i><i style="left:350.0px;top:165.1px;width:5.2px;height:5.1px;background:#9999f6"></i><i style="left:355.0px;top:160.2px;width:5.2px;height:5.1px;background:#9695f5"></i><i style="left:355.0px;top:165.1px;width:5.2px;height:5.1px;background:#8a88f4"></i><i style="left:360.0px;top:160.2px;width:5.2px;height:5.1px;background:#807ef3"></i><i style="left:360.0px;top:165.1px;width:5.2px;height:5.1px;background:#9d9df6"></i><i style="left:365.0px;top:160.2px;width:5.2px;height:5.1px;background:#9392f5"></i><i style="left:365.0px;top:165.1px;width:5.2px;height:5.1px;background:#9999f6"></i><i style="left:370.0px;top:160.2px;width:5.2px;height:5.1px;background:#9998f5"></i><i style="left:370.0px;top:165.1px;width:5.2px;height:5.1px;background:#8e8cf4"></i>
<i style="left:435.0px;top:160.2px;width:5.2px;height:5.1px;background:#c8cdfa"></i><i style="left:435.0px;top:165.1px;width:5.2px;height:5.1px;background:#c6cbfa"></i>
<i style="left:440.0px;top:160.2px;width:5.2px;height:5.1px;background:#9b9bf6"></i><i style="left:440.0px;top:165.1px;width:5.2px;height:5.1px;background:#7f7cf3"></i><i style="left:445.0px;top:160.2px;width:5.2px;height:5.1px;background:#8d8cf4"></i><i style="left:445.0px;top:165.1px;width:5.2px;height:5.1px;background:#8380f3"></i><i style="left:450.0px;top:160.2px;width:5.2px;height:5.1px;background:#7f7cf3"></i><i style="left:450.0px;top:165.1px;width:5.2px;height:5.1px;background:#a8a9f7"></i>
<i style="left:494.4px;top:160.2px;width:5.2px;height:5.1px;background:#acaef7"></i><i style="left:494.4px;top:165.1px;width:5.2px;height:5.1px;background:#9b9bf6"></i><i style="left:499.4px;top:160.2px;width:5.2px;height:5.1px;background:#9fa0f6"></i><i style="left:499.4px;top:165.1px;width:5.2px;height:5.1px;background:#bec2f9"></i><i style="left:504.4px;top:160.2px;width:5.2px;height:5.1px;background:#bfc3f9"></i><i style="left:504.4px;top:165.1px;width:5.2px;height:5.1px;background:#b1b3f8"></i><i style="left:509.4px;top:160.2px;width:5.2px;height:5.1px;background:#c1c5f9"></i><i style="left:509.4px;top:165.1px;width:5.2px;height:5.1px;background:#babdf8"></i><i style="left:514.4px;top:160.2px;width:5.2px;height:5.1px;background:#c1c5f9"></i><i style="left:514.4px;top:165.1px;width:5.2px;height:5.1px;background:#a7a8f7"></i><i style="left:519.4px;top:160.2px;width:5.2px;height:5.1px;background:#a2a3f6"></i><i style="left:519.4px;top:165.1px;width:5.2px;height:5.1px;background:#9d9df6"></i><i style="left:524.4px;top:160.2px;width:5.2px;height:5.1px;background:#bec1f9"></i><i style="left:524.4px;top:165.1px;width:5.2px;height:5.1px;background:#a5a6f7"></i><i style="left:529.4px;top:160.2px;width:5.2px;height:5.1px;background:#a7a9f7"></i><i style="left:529.4px;top:165.1px;width:5.2px;height:5.1px;background:#bec2f9"></i><i style="left:534.4px;top:160.2px;width:1.4px;height:5.1px;background:#9e9ef6"></i><i style="left:534.4px;top:165.1px;width:1.4px;height:5.1px;background:#9a9af6"></i>
<i style="left:570.0px;top:160.2px;width:5.2px;height:5.1px;background:#b5b8f8"></i><i style="left:570.0px;top:165.1px;width:5.2px;height:5.1px;background:#9190f5"></i><i style="left:575.0px;top:160.2px;width:5.2px;height:5.1px;background:#acaef7"></i><i style="left:575.0px;top:165.1px;width:5.2px;height:5.1px;background:#a8a9f7"></i><i style="left:580.0px;top:160.2px;width:5.2px;height:5.1px;background:#8f8ef5"></i><i style="left:580.0px;top:165.1px;width:5.2px;height:5.1px;background:#9796f5"></i><i style="left:585.0px;top:160.2px;width:5.2px;height:5.1px;background:#b8bbf8"></i><i style="left:585.0px;top:165.1px;width:5.2px;height:5.1px;background:#abacf7"></i><i style="left:590.0px;top:160.2px;width:5.2px;height:5.1px;background:#a7a8f7"></i><i style="left:590.0px;top:165.1px;width:5.2px;height:5.1px;background:#afb1f8"></i><i style="left:595.0px;top:160.2px;width:5.2px;height:5.1px;background:#b6b9f8"></i><i style="left:595.0px;top:165.1px;width:5.2px;height:5.1px;background:#b0b3f8"></i>
<i style="left:640.0px;top:160.2px;width:5.2px;height:5.1px;background:#9493f5"></i><i style="left:640.0px;top:165.1px;width:5.2px;height:5.1px;background:#bbbef9"></i><i style="left:645.0px;top:160.2px;width:5.2px;height:5.1px;background:#9d9ef6"></i><i style="left:645.0px;top:165.1px;width:5.2px;height:5.1px;background:#a4a4f6"></i><i style="left:650.0px;top:160.2px;width:5.2px;height:5.1px;background:#bbbef9"></i><i style="left:650.0px;top:165.1px;width:5.2px;height:5.1px;background:#aaabf7"></i><i style="left:655.0px;top:160.2px;width:5.2px;height:5.1px;background:#9a99f6"></i><i style="left:655.0px;top:165.1px;width:5.2px;height:5.1px;background:#a0a0f6"></i><i style="left:660.0px;top:160.2px;width:5.2px;height:5.1px;background:#b8bbf8"></i><i style="left:660.0px;top:165.1px;width:5.2px;height:5.1px;background:#8683f4"></i><i style="left:665.0px;top:160.2px;width:5.2px;height:5.1px;background:#918ff5"></i><i style="left:665.0px;top:165.1px;width:5.2px;height:5.1px;background:#8684f4"></i><i style="left:670.0px;top:160.2px;width:5.2px;height:5.1px;background:#b6b9f8"></i><i style="left:670.0px;top:165.1px;width:5.2px;height:5.1px;background:#adaff7"></i><i style="left:675.0px;top:160.2px;width:5.2px;height:5.1px;background:#babdf8"></i><i style="left:675.0px;top:165.1px;width:5.2px;height:5.1px;background:#9190f5"></i><i style="left:680.0px;top:160.2px;width:5.2px;height:5.1px;background:#adaff7"></i><i style="left:680.0px;top:165.1px;width:5.2px;height:5.1px;background:#b5b7f8"></i><i style="left:685.0px;top:160.2px;width:5.2px;height:5.1px;background:#a5a6f7"></i><i style="left:685.0px;top:165.1px;width:5.2px;height:5.1px;background:#8a88f4"></i><i style="left:690.0px;top:160.2px;width:5.2px;height:5.1px;background:#8f8df5"></i><i style="left:690.0px;top:165.1px;width:5.2px;height:5.1px;background:#aeb0f7"></i>
<i style="left:715.0px;top:160.2px;width:5.2px;height:5.1px;background:#bec1f9"></i><i style="left:715.0px;top:165.1px;width:5.2px;height:5.1px;background:#9c9cf6"></i><i style="left:720.0px;top:160.2px;width:5.2px;height:5.1px;background:#abadf7"></i><i style="left:720.0px;top:165.1px;width:5.2px;height:5.1px;background:#a6a7f7"></i>
<i style="left:725.0px;top:160.2px;width:5.2px;height:5.1px;background:#adaff7"></i><i style="left:725.0px;top:165.1px;width:5.2px;height:5.1px;background:#afb2f8"></i>
<i style="left:730.0px;top:160.2px;width:5.2px;height:5.1px;background:#b6b9f8"></i><i style="left:730.0px;top:165.1px;width:5.2px;height:5.1px;background:#bfc3f9"></i>
<i style="left:785.5px;top:160.2px;width:5.2px;height:5.1px;background:#c6cafa"></i><i style="left:785.5px;top:165.1px;width:5.2px;height:5.1px;background:#a5a6f7"></i><i style="left:790.5px;top:160.2px;width:5.2px;height:5.1px;background:#b0b2f8"></i><i style="left:790.5px;top:165.1px;width:5.2px;height:5.1px;background:#aaabf7"></i><i style="left:795.5px;top:160.2px;width:5.2px;height:5.1px;background:#c5cafa"></i><i style="left:795.5px;top:165.1px;width:5.2px;height:5.1px;background:#a8a9f7"></i><i style="left:800.5px;top:160.2px;width:4.1px;height:5.1px;background:#c6cbfa"></i><i style="left:800.5px;top:165.1px;width:4.1px;height:5.1px;background:#a7a9f7"></i>
<i style="left:425.2px;top:114.2px;width:4.8px;height:10.4px;background:#d3272c"></i><i style="left:430px;top:114.2px;width:4.6px;height:10.4px;background:#c9585b"></i>
<i style="left:425.2px;top:129.8px;width:4.8px;height:10.0px;background:#1f9a3a"></i><i style="left:430px;top:129.8px;width:4.6px;height:10.0px;background:#4e9f5e"></i>
<i style="left:425.2px;top:145px;width:4.8px;height:9.8px;background:#cf3032"></i><i style="left:430px;top:145px;width:4.6px;height:9.8px;background:#c46a5e"></i>
<i style="left:425.2px;top:160.2px;width:4.8px;height:9.8px;background:#d3272c"></i><i style="left:430px;top:160.2px;width:4.6px;height:9.8px;background:#c9585b"></i>
<i style="left:420px;top:114.2px;width:5.2px;height:10.4px;background:#f1e3ea"></i>
<i style="left:420px;top:129.8px;width:5.2px;height:10px;background:#dfe9ee"></i>
</div>
<div class="abs" style="left:423.5px;top:160.5px;width:8.5px;height:8.5px;border-radius:50%;background:radial-gradient(circle at 40% 35%,#ff8a8a 0,#e0161c 45%,#7d080c 100%)"></div>
<div class="abs" style="left:861px;top:160.5px;font-size:8.5px;color:#1a1ae6;font-weight:bold;white-space:nowrap">39</div>
<div class="abs" style="left:799px;top:160.5px;font-size:8.5px;color:#1a1ae6;font-weight:bold;white-space:nowrap">B</div>
<div class="abs" style="left:888.9px;top:113.1px;width:11.1px;height:57px;background:#f1f1f1"></div>
<div class="abs" style="left:888.9px;top:126.7px;width:11.1px;height:30px;background:#d6d6d6"></div>
<div class="abs" style="left:891.2px;top:117.6px;width:0;height:0;border-bottom:4.6px solid #111;border-left:3.2px solid transparent;border-right:3.2px solid transparent"></div>
<div class="abs" style="left:891.2px;top:161.2px;width:0;height:0;border-top:4.6px solid #111;border-left:3.2px solid transparent;border-right:3.2px solid transparent"></div>
<div class="abs" style="left:319.7px;top:169.7px;width:580.3px;height:11.3px;background:#eeeeee"></div>
<div class="abs" style="left:332.5px;top:169.7px;width:137.5px;height:11.3px;background:#d6d6d6"></div>
<div class="abs" style="left:323.2px;top:171.6px;width:0;height:0;border-right:5.5px solid #111;border-top:3.6px solid transparent;border-bottom:3.6px solid transparent"></div>
<div class="abs" style="left:880.2px;top:171.9px;width:0;height:0;border-left:5.5px solid #111;border-top:3.6px solid transparent;border-bottom:3.6px solid transparent"></div>
<div class="abs" style="left:319.7px;top:181px;width:580.3px;height:1px;background:#d4d4d4"></div>
<div class="abs" style="left:319.2px;top:95.9px;width:1px;height:86px;background:#d4d4d4"></div>
<div id="tabs" class="abs"></div>
<div class="abs tab" style="left:332.8px;font-weight:bold">属性</div>
<svg class="abs" style="left:366px;top:190.2px" width="10" height="12" viewBox="0 0 10 12"><path d="M0.5 0.5 L6.5 0.5 L9.5 3.5 L9.5 11.5 L0.5 11.5Z" fill="#fdfdfd" stroke="#b5b5b5"/><rect x="2.5" y="4.5" width="5" height="4" rx="1" fill="#3f8fe0"/></svg>
<div class="abs tab" style="left:379.5px">项目资料</div>
<div class="abs tab" style="left:429px">项目资料分类视图</div>
<div class="abs" style="left:508.2px;top:186.6px;width:61px;height:18.4px;background:#f5f5f5;border-radius:3px 3px 0 0"></div>
<svg class="abs" style="left:513.6px;top:189.8px" width="12" height="12" viewBox="0 0 12 12"><path d="M4.6 0.8 L6.6 0.8 L7.2 3.2 L9.8 3 L11 4.8 L9.6 6.6 L10.4 9.6 L8.4 11.2 L5.8 10 L3.2 11.2 L1.2 9.8 L2.2 6.8 L0.8 5 L2 3.2 L4.2 3.4Z" fill="#f7cc2a" stroke="#e0a010" stroke-width=".8" stroke-linejoin="round"/><circle cx="5.6" cy="4.6" r="1.6" fill="#fbe27a"/></svg>
<div class="abs tab" style="left:528px">设计任务</div>
<div class="abs tab" style="left:577.6px;font-size:9px">[变更历史]</div>
<div class="abs" style="left:320px;top:204px;width:580px;height:22px;background:#f3f3f3"></div>
<svg class="abs" style="left:322.5px;top:211px" width="10" height="10" viewBox="0 0 10 10"><rect x="0.5" y="0.5" width="9" height="9" fill="#fff" stroke="#8a8a8a"/><path d="M3.5 0.5 V9.5 M0.5 3.5 H9.5 M0.5 6.5 H9.5" stroke="#8a8a8a" stroke-width=".8"/><rect x="1" y="1" width="2.2" height="2.2" fill="#5cb85c"/><rect x="1" y="4" width="2.2" height="2.2" fill="#5cb85c"/><rect x="1" y="7" width="2.2" height="2.2" fill="#5cb85c"/></svg>
<div class="abs" style="left:334.3px;top:214.2px;width:0;height:0;border-top:3.6px solid #111;border-left:3px solid transparent;border-right:3px solid transparent"></div>
<div class="abs" style="left:348px;top:212.2px;font-size:8.7px;color:#222;white-space:nowrap">下达任务</div>
<div class="abs" style="left:319.7px;top:225.5px;width:580.3px;height:282px;background:#fff"></div>
<div class="abs gh g2" style="left:319.7px;top:226px;width:580.3px;overflow:hidden"><div class="abs ghc" style="left:0.0px;width:29.5px">序号</div><div class="abs ghc" style="left:29.5px;width:59.0px">进度状态</div><div class="abs ghc" style="left:88.5px;width:60.8px">执行状态</div><div class="abs ghc" style="left:149.3px;width:57.2px">执行人</div><div class="abs ghc" style="left:206.5px;width:57.3px">分配人</div><div class="abs ghc" style="left:263.8px;width:116.5px">名称</div><div class="abs ghc" style="left:380.3px;width:73.0px">项目代号</div><div class="abs ghc" style="left:453.3px;width:73.2px">项目类别</div><div class="abs ghc" style="left:526.5px;width:72.8px">物料编码</div></div>
<div class="abs" style="left:319.2px;top:225.5px;width:1px;height:282px;background:#d4d4d4"></div>
<div class="abs" style="left:319.7px;top:496.2px;width:580.3px;height:10.6px;background:#efefef"></div>
<div class="abs" style="left:333px;top:496.2px;width:156.6px;height:10.6px;background:#dcdcdc"></div>
<div class="abs" style="left:323.8px;top:498.4px;width:0;height:0;border-right:5.2px solid #111;border-top:3.3px solid transparent;border-bottom:3.3px solid transparent"></div>
<div class="abs" style="left:891px;top:498px;width:0;height:0;border-left:5.2px solid #111;border-top:3.3px solid transparent;border-bottom:3.3px solid transparent"></div>
<div class="abs" style="left:319.7px;top:506.8px;width:580.3px;height:1.2px;background:#cdcdcd"></div>
<div id="bbar" class="abs"></div>
<div class="abs" style="left:178px;top:509px;width:66.5px;height:17px;background:#ececec;border-radius:4px 4px 0 0"></div>
<svg class="abs" style="left:184.6px;top:511.2px" width="11" height="11" viewBox="0 0 11 11"><path d="M5.5 0.5 L10.5 5.5 L5.5 10.5 L0.5 5.5Z" fill="#8f8bd6" stroke="#4d4a9e" stroke-width=".9"/></svg>
<div class="abs" style="left:198.5px;top:513.2px;font-size:9px;color:#111;white-space:nowrap">定型区</div>
<svg class="abs" style="left:228.8px;top:514.3px" width="7" height="7" viewBox="0 0 7 7"><path d="M1 1 L6 6 M6 1 L1 6" stroke="#8a8a8a" stroke-width="1.3"/><rect x="2.3" y="2.3" width="2.4" height="2.4" fill="#ececec"/></svg>
<div class="abs" style="left:715.3px;top:471.6px;font-size:15.4px;color:#a9a9a9;white-space:nowrap">激活 Windows</div>
<div class="abs" style="left:715.5px;top:490.6px;font-size:11.55px;color:#b3b3b3;white-space:nowrap;letter-spacing:-.2px">转到"设置"以激活 Windows。</div>
<!-- tree -->
<div id="treetb" class="abs"></div>
<svg class="abs" style="left:310.5px;top:63.2px" width="7" height="7" viewBox="0 0 7 7"><path d="M0.8 0.8 L3.5 3.2 L6.2 0.8 M0.8 3.8 L3.5 6.2 L6.2 3.8" fill="none" stroke="#3c3c3c" stroke-width="1.2"/></svg>
<div id="tinput" class="abs"></div>
<div id="treepanel" class="abs"></div>
<svg class="abs" style="left:174.5px;top:80px" width="12" height="12" viewBox="0 0 12 12">
 <path d="M1 5.2 A4.6 4.6 0 0 1 8.8 2.6 L10.4 1 L10.6 5.4 L6.2 5.2 L7.6 3.8 A3 3 0 0 0 2.8 5.4Z" fill="#2f86e0"/>
 <path d="M11 6.8 A4.6 4.6 0 0 1 3.2 9.4 L1.6 11 L1.4 6.6 L5.8 6.8 L4.4 8.2 A3 3 0 0 0 9.2 6.6Z" fill="#2f86e0"/>
</svg>
<svg class="abs" style="left:191.5px;top:81px" width="12" height="11" viewBox="0 0 12 11">
 <path d="M2.4 2.6 H9 M5.6 2.6 V8 H9" fill="none" stroke="#5a6e8c" stroke-width="1"/>
 <circle cx="2.3" cy="2.6" r="1.7" fill="#cfe2fa" stroke="#2f6fd0" stroke-width=".9"/>
 <circle cx="9.6" cy="2.6" r="1.7" fill="#cfe2fa" stroke="#2f6fd0" stroke-width=".9"/>
 <circle cx="9.6" cy="8" r="1.7" fill="#cfe2fa" stroke="#2f6fd0" stroke-width=".9"/>
</svg>
<svg class="abs" style="left:292.5px;top:82px" width="8" height="8" viewBox="0 0 8 8"><rect x=".4" y=".4" width="7.2" height="7.2" rx="1" fill="#f7f7f7" stroke="#d6d6d6" stroke-width=".8"/><path d="M3 1.2 H5 V4 H6.8 L4 7 L1.2 4 H3Z" fill="#1b8fd6"/></svg>
<svg class="abs" style="left:303.5px;top:82px" width="8" height="8" viewBox="0 0 8 8"><rect x=".4" y=".4" width="7.2" height="7.2" rx="1" fill="#f7f7f7" stroke="#d6d6d6" stroke-width=".8"/><path d="M3 6.8 H5 V4 H6.8 L4 1 L1.2 4 H3Z" fill="#f2780c"/></svg>


<div class="abs" style="left:172.5px;top:281.2px;width:142.7px;height:14.5px;background:#fdee9f"></div>
<svg width="0" height="0" style="position:absolute"><defs><linearGradient id="fg" x1="0" y1="0" x2="0" y2="1"><stop offset="0" stop-color="#fff0a8"/><stop offset=".45" stop-color="#f9dc6c"/><stop offset="1" stop-color="#eebf34"/></linearGradient></defs></svg>
<div class="abs ta d" style="left:174.6px;top:102.7px"></div>
<svg class="abs" style="left:183.8px;top:99.7px" width="12" height="11" viewBox="0 0 12 11"><rect x="0.5" y="0.5" width="11" height="7.6" rx="1" fill="#4a90dc" stroke="#3a6fae" stroke-width=".8"/><rect x="1.8" y="1.7" width="8.4" height="5" fill="#8cc8f5"/><rect x="4.4" y="8.2" width="3.2" height="1.4" fill="#9a9a9a"/><rect x="2.8" y="9.5" width="6.4" height="1.2" fill="#8a8a8a"/></svg>
<div class="abs tt" style="left:198.3px;top:102px;color:#222;text-shadow:none;font-size:8.8px">售前项目分类</div>
<div class="abs ta d" style="left:186.2px;top:118.0px"></div>
<svg class="abs" style="left:196.1px;top:116.4px" width="11" height="9" viewBox="0 0 11 9"><path d="M0.5 1.8 Q0.5 0.6 1.7 0.6 L3.8 0.6 L4.9 1.8 L9.4 1.8 Q10.5 1.8 10.5 2.9 L10.5 7.5 Q10.5 8.5 9.5 8.5 L1.5 8.5 Q0.5 8.5 0.5 7.5Z" fill="url(#fg)" stroke="#a67d12" stroke-width=".9"/><path d="M1.4 3.3 L9.6 3.3" stroke="#fffbe0" stroke-width="1"/></svg>
<div class="abs tt" style="left:210px;top:117px">按类型分</div>
<div class="abs ta r" style="left:198.3px;top:132.4px"></div>
<svg class="abs" style="left:207.7px;top:131.6px" width="11" height="9" viewBox="0 0 11 9"><path d="M0.5 1.8 Q0.5 0.6 1.7 0.6 L3.8 0.6 L4.9 1.8 L9.4 1.8 Q10.5 1.8 10.5 2.9 L10.5 7.5 Q10.5 8.5 9.5 8.5 L1.5 8.5 Q0.5 8.5 0.5 7.5Z" fill="url(#fg)" stroke="#a67d12" stroke-width=".9"/><path d="M1.4 3.3 L9.6 3.3" stroke="#fffbe0" stroke-width="1"/></svg>
<div class="abs tt" style="left:221.3px;top:132px">电气类</div>
<div class="abs ta d" style="left:198.1px;top:148.3px"></div>
<svg class="abs" style="left:207.7px;top:146.7px" width="11" height="9" viewBox="0 0 11 9"><path d="M0.5 1.8 Q0.5 0.6 1.7 0.6 L3.8 0.6 L4.9 1.8 L9.4 1.8 Q10.5 1.8 10.5 2.9 L10.5 7.5 Q10.5 8.5 9.5 8.5 L1.5 8.5 Q0.5 8.5 0.5 7.5Z" fill="url(#fg)" stroke="#a67d12" stroke-width=".9"/><path d="M1.4 3.3 L9.6 3.3" stroke="#fffbe0" stroke-width="1"/></svg>
<div class="abs tt" style="left:221.3px;top:147px">干渣类</div>
<div class="abs ta d" style="left:209.7px;top:163.7px"></div>
<svg class="abs" style="left:219.5px;top:162.1px" width="11" height="9" viewBox="0 0 11 9"><path d="M0.5 1.8 Q0.5 0.6 1.7 0.6 L3.8 0.6 L4.9 1.8 L9.4 1.8 Q10.5 1.8 10.5 2.9 L10.5 7.5 Q10.5 8.5 9.5 8.5 L1.5 8.5 Q0.5 8.5 0.5 7.5Z" fill="url(#fg)" stroke="#a67d12" stroke-width=".9"/><path d="M1.4 3.3 L9.6 3.3" stroke="#fffbe0" stroke-width="1"/></svg>
<div class="abs tt" style="left:233.4px;top:163px">2024年</div>
<svg class="abs" style="left:231.1px;top:177.2px" width="11" height="9" viewBox="0 0 11 9"><path d="M0.5 1.8 Q0.5 0.6 1.7 0.6 L3.8 0.6 L4.9 1.8 L9.4 1.8 Q10.5 1.8 10.5 2.9 L10.5 7.5 Q10.5 8.5 9.5 8.5 L1.5 8.5 Q0.5 8.5 0.5 7.5Z" fill="url(#fg)" stroke="#a67d12" stroke-width=".9"/><path d="M1.4 3.3 L9.6 3.3" stroke="#fffbe0" stroke-width="1"/></svg>
<div class="abs tt" style="left:245.3px;top:178px">06月</div>
<svg class="abs" style="left:231.1px;top:192.6px" width="11" height="9" viewBox="0 0 11 9"><path d="M0.5 1.8 Q0.5 0.6 1.7 0.6 L3.8 0.6 L4.9 1.8 L9.4 1.8 Q10.5 1.8 10.5 2.9 L10.5 7.5 Q10.5 8.5 9.5 8.5 L1.5 8.5 Q0.5 8.5 0.5 7.5Z" fill="url(#fg)" stroke="#a67d12" stroke-width=".9"/><path d="M1.4 3.3 L9.6 3.3" stroke="#fffbe0" stroke-width="1"/></svg>
<div class="abs tt" style="left:245.3px;top:193px">07月</div>
<svg class="abs" style="left:231.1px;top:208.0px" width="11" height="9" viewBox="0 0 11 9"><path d="M0.5 1.8 Q0.5 0.6 1.7 0.6 L3.8 0.6 L4.9 1.8 L9.4 1.8 Q10.5 1.8 10.5 2.9 L10.5 7.5 Q10.5 8.5 9.5 8.5 L1.5 8.5 Q0.5 8.5 0.5 7.5Z" fill="url(#fg)" stroke="#a67d12" stroke-width=".9"/><path d="M1.4 3.3 L9.6 3.3" stroke="#fffbe0" stroke-width="1"/></svg>
<div class="abs tt" style="left:245.3px;top:209px">08月</div>
<div class="abs ta r" style="left:198.3px;top:224.2px"></div>
<svg class="abs" style="left:207.7px;top:223.4px" width="11" height="9" viewBox="0 0 11 9"><path d="M0.5 1.8 Q0.5 0.6 1.7 0.6 L3.8 0.6 L4.9 1.8 L9.4 1.8 Q10.5 1.8 10.5 2.9 L10.5 7.5 Q10.5 8.5 9.5 8.5 L1.5 8.5 Q0.5 8.5 0.5 7.5Z" fill="url(#fg)" stroke="#a67d12" stroke-width=".9"/><path d="M1.4 3.3 L9.6 3.3" stroke="#fffbe0" stroke-width="1"/></svg>
<div class="abs tt" style="left:221.3px;top:224px">国际业务类</div>
<div class="abs ta r" style="left:198.3px;top:239.6px"></div>
<svg class="abs" style="left:207.7px;top:238.8px" width="11" height="9" viewBox="0 0 11 9"><path d="M0.5 1.8 Q0.5 0.6 1.7 0.6 L3.8 0.6 L4.9 1.8 L9.4 1.8 Q10.5 1.8 10.5 2.9 L10.5 7.5 Q10.5 8.5 9.5 8.5 L1.5 8.5 Q0.5 8.5 0.5 7.5Z" fill="url(#fg)" stroke="#a67d12" stroke-width=".9"/><path d="M1.4 3.3 L9.6 3.3" stroke="#fffbe0" stroke-width="1"/></svg>
<div class="abs tt" style="left:221.3px;top:239px">环保类</div>
<div class="abs ta r" style="left:198.3px;top:254.7px"></div>
<svg class="abs" style="left:207.7px;top:253.9px" width="11" height="9" viewBox="0 0 11 9"><path d="M0.5 1.8 Q0.5 0.6 1.7 0.6 L3.8 0.6 L4.9 1.8 L9.4 1.8 Q10.5 1.8 10.5 2.9 L10.5 7.5 Q10.5 8.5 9.5 8.5 L1.5 8.5 Q0.5 8.5 0.5 7.5Z" fill="url(#fg)" stroke="#a67d12" stroke-width=".9"/><path d="M1.4 3.3 L9.6 3.3" stroke="#fffbe0" stroke-width="1"/></svg>
<div class="abs tt" style="left:221.3px;top:255px">其他类</div>
<div class="abs ta r" style="left:198.3px;top:270.2px"></div>
<svg class="abs" style="left:207.7px;top:269.4px" width="11" height="9" viewBox="0 0 11 9"><path d="M0.5 1.8 Q0.5 0.6 1.7 0.6 L3.8 0.6 L4.9 1.8 L9.4 1.8 Q10.5 1.8 10.5 2.9 L10.5 7.5 Q10.5 8.5 9.5 8.5 L1.5 8.5 Q0.5 8.5 0.5 7.5Z" fill="url(#fg)" stroke="#a67d12" stroke-width=".9"/><path d="M1.4 3.3 L9.6 3.3" stroke="#fffbe0" stroke-width="1"/></svg>
<div class="abs tt" style="left:221.3px;top:270px">湿渣类</div>
<svg class="abs" style="left:196.1px;top:284.5px" width="11" height="9" viewBox="0 0 11 9"><path d="M0.5 1.8 Q0.5 0.6 1.7 0.6 L3.8 0.6 L4.9 1.8 L9.4 1.8 Q10.5 1.8 10.5 2.9 L10.5 7.5 Q10.5 8.5 9.5 8.5 L1.5 8.5 Q0.5 8.5 0.5 7.5Z" fill="url(#fg)" stroke="#a67d12" stroke-width=".9"/><path d="M1.4 3.3 L9.6 3.3" stroke="#fffbe0" stroke-width="1"/></svg>
<div class="abs tt" style="left:210px;top:285px">未分类</div>
</body>
</html>
